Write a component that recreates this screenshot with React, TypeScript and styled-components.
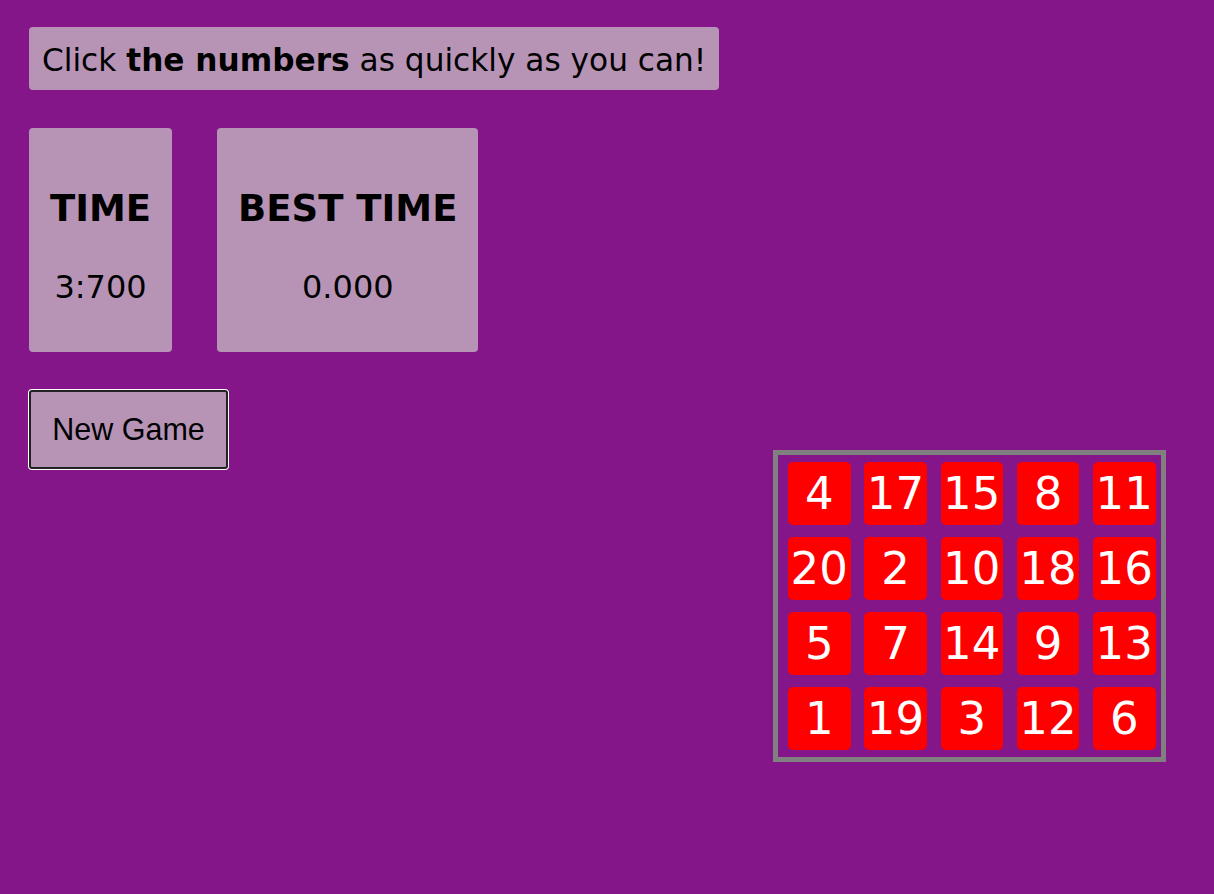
import { FC } from 'react'
import styled, { createGlobalStyle } from 'styled-components'

const GlobalStyle = createGlobalStyle`
  html, body {
    margin: 0;
    padding: 0;
    background: #84168a;
  }
  body {
    font-family: "DejaVu Sans", Verdana, sans-serif;
  }
`

const Page = styled.div`
  display: flex;
  justify-content: space-between;
  align-items: flex-start;
  padding: 27px 48px 0 29px;
  min-height: 867px;
`

const LeftColumn = styled.div`
  display: flex;
  flex-direction: column;
  align-items: flex-start;
`

const Instructions = styled.p`
  margin: 0;
  padding: 3px 13px 0;
  height: 63px;
  box-sizing: border-box;
  display: flex;
  align-items: center;
  background: #b794b6;
  border-radius: 4px;
  font-size: 31.2px;
  color: #000;
`

const Stats = styled.div`
  display: flex;
  gap: 45px;
  margin-top: 38px;
`

const StatCard = styled.div`
  display: flex;
  flex-direction: column;
  align-items: center;
  justify-content: center;
  gap: 40px;
  height: 224px;
  padding: 14px 21px 0;
  box-sizing: border-box;
  background: #b794b6;
  border-radius: 4px;
`

const StatTitle = styled.h2`
  margin: 0;
  font-size: 37px;
  font-weight: bold;
  line-height: 1.1;
`

const StatValue = styled.div`
  font-size: 32px;
  line-height: 1.1;
`

const NewGameButton = styled.button`
  margin-top: 38px;
  width: 199px;
  height: 79px;
  background: #b794b6;
  border: 2px solid #222;
  border-radius: 3px;
  box-shadow: 0 0 0 1px #fff;
  font-family: "Liberation Sans", Arial, sans-serif;
  font-size: 30.5px;
  color: #000;
  cursor: pointer;
`

const Board = styled.div`
  margin-top: 423px;
  display: grid;
  grid-template-columns: repeat(5, 62.5px);
  grid-auto-rows: 63px;
  column-gap: 13.75px;
  row-gap: 12px;
  padding: 7px 5.5px 7px 10px;
  border: 5px solid #808080;
`

const Tile = styled.button`
  display: flex;
  align-items: center;
  justify-content: center;
  padding: 0;
  border: none;
  border-radius: 5px;
  background: #ff0000;
  color: #fff;
  font-family: "DejaVu Sans", Verdana, sans-serif;
  font-size: 45px;
  cursor: pointer;
`

const numbers = [4, 17, 15, 8, 11, 20, 2, 10, 18, 16, 5, 7, 14, 9, 13, 1, 19, 3, 12, 6]

const App: FC = () => {
  return (
    <>
      <GlobalStyle />
      <Page>
        <LeftColumn>
          <Instructions>
            Click&nbsp;<b>the numbers</b>&nbsp;as quickly as you can!
          </Instructions>
          <Stats>
            <StatCard>
              <StatTitle>TIME</StatTitle>
              <StatValue>3:700</StatValue>
            </StatCard>
            <StatCard>
              <StatTitle>BEST TIME</StatTitle>
              <StatValue>0.000</StatValue>
            </StatCard>
          </Stats>
          <NewGameButton>New Game</NewGameButton>
        </LeftColumn>
        <Board>
          {numbers.map(n => (
            <Tile key={n}>{n}</Tile>
          ))}
        </Board>
      </Page>
    </>
  )
}

export default App
